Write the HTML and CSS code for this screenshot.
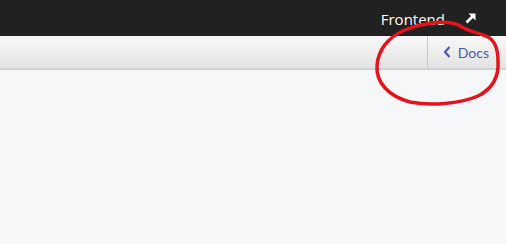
FILE: index.html
```html
<!DOCTYPE html>
<html lang="en">
<head>
  <meta charset="UTF-8">
  <title>Docs</title>
  <link rel="stylesheet" href="styles.css">
</head>
<body>
  <header class="topbar">
    <a class="topbar-link" href="#">Frontend</a>
    <svg class="ext-icon" viewBox="0 0 12 12" width="12" height="12">
      <path d="M1.5 10.5 L8.5 3.5" stroke="#fff" stroke-width="2.6" fill="none"/>
      <path d="M3.5 1.5 H10.5 V8.5 Z" fill="#fff"/>
    </svg>
  </header>
  <div class="toolbar">
    <a class="docs-btn" href="#">
      <svg class="chevron" viewBox="0 0 8 12" width="8" height="12">
        <path d="M6.5 1 L2 6 L6.5 11" stroke="currentColor" stroke-width="2.2" fill="none"/>
      </svg>
      Docs
    </a>
  </div>
  <main class="content"></main>

  <!-- red marker circle drawn over the screenshot -->
  <svg class="marker" viewBox="0 0 506 244" width="506" height="244">
    <path d="M462 27 C450 19 425 22 405 30 C388 37 378 50 377 66 C376 82 388 96 410 102 C430 106 460 104 478 96 C494 88 499 76 498 61 C498 49 495 41 488 37 C480 33 470 32 462 27"
      stroke="#e3141b" stroke-width="3.5" fill="none" stroke-linecap="round"/>
  </svg>
</body>
</html>
```

FILE: styles.css
```css
html, body {
  margin: 0;
  height: 100%;
}
body {
  background: #f5f7f8;
  font-family: Lato, 'Open Sans', sans-serif;
  position: relative;
  overflow: hidden;
}
.topbar {
  background: #212121;
  height: 36px;
  display: flex;
  align-items: center;
  justify-content: flex-end;
  padding-right: 29px;
  box-sizing: border-box;
}
.topbar-link {
  color: #fff;
  text-decoration: none;
  font-family: 'Open Sans', sans-serif;
  font-weight: 500;
  font-size: 15px;
  margin-right: 20px;
  margin-top: 1px;
}
.ext-icon {
  display: block;
  margin-top: -1px;
}
.toolbar {
  height: 32px;
  background: linear-gradient(#f8f8f8, #e3e3e3);
  border-bottom: 2px solid #d2d2d2;
  display: flex;
  justify-content: flex-end;
}
.docs-btn {
  display: flex;
  align-items: center;
  gap: 7px;
  padding: 0 17px 0 15px;
  border-left: 1px solid #c9c9c9;
  color: #4b5ba8;
  text-decoration: none;
  font-size: 14px;
}
.chevron {
  display: block;
}
.marker {
  position: absolute;
  left: 0;
  top: 0;
  pointer-events: none;
}
```
